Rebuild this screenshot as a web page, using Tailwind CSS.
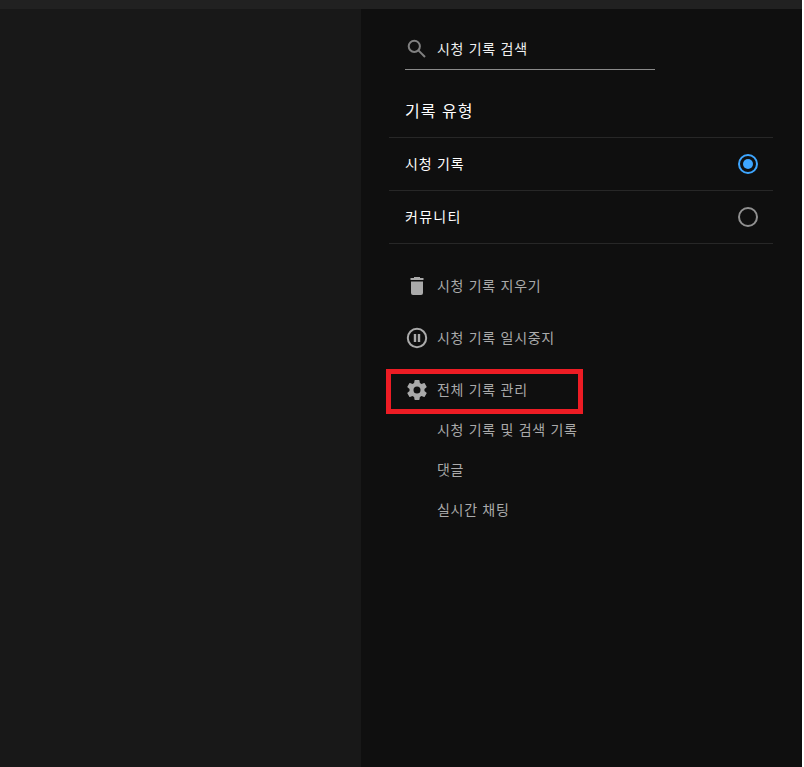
<!DOCTYPE html>
<html lang="ko">
<head>
    <meta charset="UTF-8">
    <title>시청 기록</title>
    <script src="https://cdn.jsdelivr.net/npm/@tailwindcss/browser@4"></script>
</head>
<body class="bg-[#181818] font-['Noto_Sans_CJK_KR','Noto_Sans',sans-serif] overflow-hidden">
    <div class="flex h-[767px] w-[804px]">
        <div class="flex flex-col w-[802px]">
            <!-- Top bar -->
            <div class="h-[9px] bg-[#212121]"></div>
            <div class="flex flex-1">
                <div class="shrink-0 bg-[#181818] w-[361px]"></div>
                <!-- Side panel -->
                <div class="flex-1 bg-[#0f0f0f] pl-[28px]">
                    <div class="w-[384px]">
                        <!-- Search -->
                        <div class="ml-[16px] w-[250px] h-[51px] mt-[10px] border-b border-[#8a8a8a] flex items-center pt-[8px]">
                            <svg class="w-6 h-6 text-[#808080]" viewBox="0 0 24 24" fill="none" stroke="currentColor"><circle cx="9.3" cy="10.3" r="5.6" stroke-width="2"/><path d="M13.4 14.4L20 21" stroke-width="2"/></svg>
                            <span class="ml-[8px] text-[14px] leading-5 tracking-[0.7px] text-[#f1f1f1]">시청 기록 검색</span>
                        </div>
                        <!-- Type heading -->
                        <div class="pl-[16px] h-[68px] flex items-center pt-[12px] text-[16px] tracking-[1px] text-white border-b border-[#272727]">기록 유형</div>
                        <!-- Radio rows -->
                        <div class="h-[53px] pl-[16px] pr-[15px] flex items-center justify-between border-b border-[#272727]">
                            <span class="pb-[2px] text-[14px] tracking-[0.8px] text-white">시청 기록</span>
                            <span class="w-5 h-5 rounded-full border-2 border-[#3ea6ff] flex items-center justify-center"><span class="w-[10px] h-[10px] rounded-full bg-[#3ea6ff]"></span></span>
                        </div>
                        <div class="h-[53px] pl-[16px] pr-[15px] flex items-center justify-between border-b border-[#272727]">
                            <span class="pb-[2px] text-[14px] tracking-[1.3px] text-white">커뮤니티</span>
                            <span class="w-5 h-5 rounded-full border-2 border-[#909090]"></span>
                        </div>
                        <!-- Actions -->
                        <div class="mt-[16px] pl-[16px] text-[14px] tracking-[0.7px] text-[#aaaaaa]">
                            <div class="h-[52px] flex items-center gap-[8px]">
                                <svg class="w-6 h-6" viewBox="0 0 24 24" fill="currentColor"><path d="M9 3v1H5.5v2h13V4H15V3H9zM6 7.5V19a2 2 0 0 0 2 2h8a2 2 0 0 0 2-2V7.5H6z"/></svg>
                                <span class="pb-[2px]">시청 기록 지우기</span>
                            </div>
                            <div class="h-[52px] flex items-center gap-[8px]">
                                <svg class="w-6 h-6" viewBox="0 0 24 24" fill="none" stroke="currentColor"><circle cx="12" cy="12" r="9.2" stroke-width="2"/><path d="M10 8v8M14 8v8" stroke-width="2.4"/></svg>
                                <span class="pb-[2px]">시청 기록 일시중지</span>
                            </div>
                            <div class="relative h-[52px] flex items-center gap-[8px]">
                                <svg class="w-6 h-6" viewBox="0 0 24 24" fill="currentColor"><path d="M19.43 12.98c.04-.32.07-.64.07-.98s-.03-.66-.07-.98l2.11-1.65a.5.5 0 0 0 .12-.64l-2-3.46a.5.5 0 0 0-.61-.22l-2.49 1a7.3 7.3 0 0 0-1.69-.98l-.38-2.65A.49.49 0 0 0 14 2h-4a.49.49 0 0 0-.49.42l-.38 2.65c-.61.25-1.17.59-1.69.98l-2.49-1a.49.49 0 0 0-.61.22l-2 3.46a.49.49 0 0 0 .12.64l2.11 1.65c-.04.32-.07.65-.07.98s.03.66.07.98l-2.11 1.65a.5.5 0 0 0-.12.64l2 3.46c.12.22.39.3.61.22l2.49-1c.52.4 1.08.73 1.69.98l.38 2.65c.03.24.24.42.49.42h4c.25 0 .46-.18.49-.42l.38-2.65a7.3 7.3 0 0 0 1.69-.98l2.49 1c.23.09.49 0 .61-.22l2-3.46a.5.5 0 0 0-.12-.64l-2.11-1.65zM12 15.5a3.5 3.5 0 1 1 0-7 3.5 3.5 0 0 1 0 7z"/></svg>
                                <span class="pb-[2px]">전체 기록 관리</span>
                                <!-- Annotation box -->
                                <div class="absolute left-[-19px] top-[5px] w-[197px] h-[45px] border-[5px] border-[#ed1c24]"></div>
                            </div>
                            <div class="pl-[32px]">
                                <div class="h-[40px] flex items-center mt-[-6px] pb-[2px]">시청 기록 및 검색 기록</div>
                                <div class="h-[40px] flex items-center pb-[2px]">댓글</div>
                                <div class="h-[40px] flex items-center pb-[2px]">실시간 채팅</div>
                            </div>
                        </div>
                    </div>
                </div>
            </div>
        </div>
        <div class="w-[2px] bg-white"></div>
    </div>
</body>
</html>
